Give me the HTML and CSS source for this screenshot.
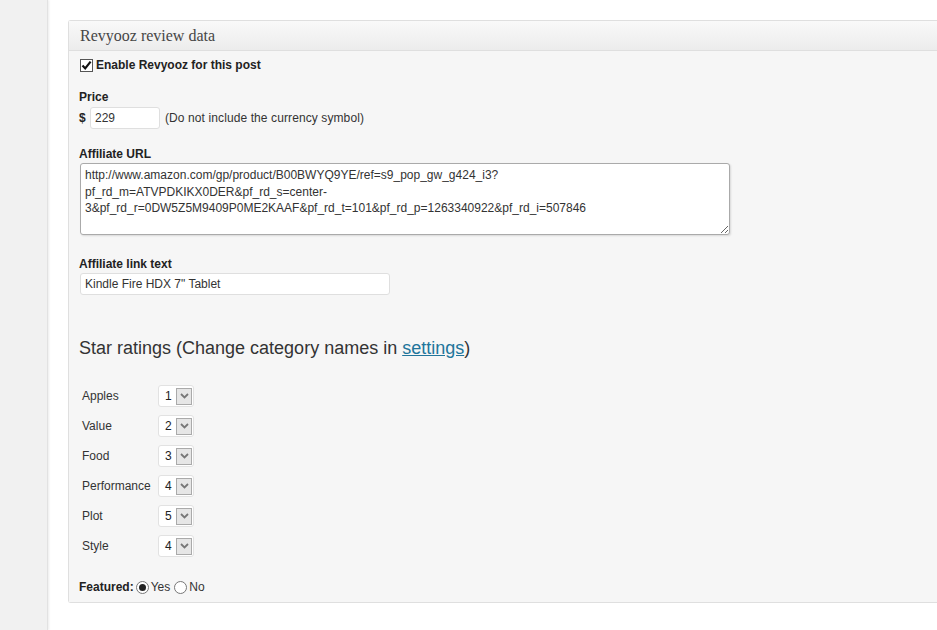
FILE: index.html
```html
<!DOCTYPE html>
<html>
<head>
<meta charset="utf-8">
<link rel="stylesheet" href="styles.css">
</head>
<body>
<div class="page">
  <div class="sidebar"></div>
  <div class="main">
    <div class="panel">
      <div class="panel-head"><h3>Revyooz review data</h3></div>
      <div class="panel-body">
        <div class="check-row">
          <span class="checkbox"><svg width="11" height="11" viewBox="0 0 11 11"><path d="M1.5 5.5 L4.2 8.4 L9.6 1.6" fill="none" stroke="#111" stroke-width="2.2"/></svg></span>
          <span class="bold">Enable Revyooz for this post</span>
        </div>

        <div class="label price-label">Price</div>
        <div class="price-row">
          <span class="bold dollar">$</span>
          <input class="text price-input" type="text" value="229">
          <span class="hint">(Do not include the currency symbol)</span>
        </div>

        <div class="label url-label">Affiliate URL</div>
        <textarea class="url-area" spellcheck="false">http://www.amazon.com/gp/product/B00BWYQ9YE/ref=s9_pop_gw_g424_i3?pf_rd_m=ATVPDKIKX0DER&amp;pf_rd_s=center-3&amp;pf_rd_r=0DW5Z5M9409P0ME2KAAF&amp;pf_rd_t=101&amp;pf_rd_p=1263340922&amp;pf_rd_i=507846</textarea>

        <div class="label link-label">Affiliate link text</div>
        <input class="text link-input" type="text" value="Kindle Fire HDX 7&quot; Tablet">

        <h2 class="star-title">Star ratings (Change category names in <a href="#">settings</a>)</h2>

        <div class="ratings">
          <div class="rating"><span class="rname">Apples</span><span class="sel"><span class="num">1</span><span class="arrow"><svg width="9" height="6" viewBox="0 0 9 6"><path d="M1 1 L4.5 4.5 L8 1" fill="none" stroke="#777" stroke-width="1.8"/></svg></span></span></div>
          <div class="rating"><span class="rname">Value</span><span class="sel"><span class="num">2</span><span class="arrow"><svg width="9" height="6" viewBox="0 0 9 6"><path d="M1 1 L4.5 4.5 L8 1" fill="none" stroke="#777" stroke-width="1.8"/></svg></span></span></div>
          <div class="rating"><span class="rname">Food</span><span class="sel"><span class="num">3</span><span class="arrow"><svg width="9" height="6" viewBox="0 0 9 6"><path d="M1 1 L4.5 4.5 L8 1" fill="none" stroke="#777" stroke-width="1.8"/></svg></span></span></div>
          <div class="rating"><span class="rname">Performance</span><span class="sel"><span class="num">4</span><span class="arrow"><svg width="9" height="6" viewBox="0 0 9 6"><path d="M1 1 L4.5 4.5 L8 1" fill="none" stroke="#777" stroke-width="1.8"/></svg></span></span></div>
          <div class="rating"><span class="rname">Plot</span><span class="sel"><span class="num">5</span><span class="arrow"><svg width="9" height="6" viewBox="0 0 9 6"><path d="M1 1 L4.5 4.5 L8 1" fill="none" stroke="#777" stroke-width="1.8"/></svg></span></span></div>
          <div class="rating"><span class="rname">Style</span><span class="sel"><span class="num">4</span><span class="arrow"><svg width="9" height="6" viewBox="0 0 9 6"><path d="M1 1 L4.5 4.5 L8 1" fill="none" stroke="#777" stroke-width="1.8"/></svg></span></span></div>
        </div>

        <div class="featured">
          <span class="bold">Featured:</span>
          <span class="radio on"><span class="dot"></span></span><span class="opt">Yes</span>
          <span class="radio"></span><span class="opt">No</span>
        </div>
      </div>
    </div>
  </div>
</div>
</body>
</html>
```

FILE: styles.css
```css
html, body {
  margin: 0;
  padding: 0;
  background: #fff;
  overflow: hidden;
}
body {
  font-family: "Liberation Sans", Arial, sans-serif;
  font-size: 12px;
  color: #333;
}
.page {
  display: flex;
  width: 937px;
  height: 630px;
}
.sidebar {
  width: 47px;
  flex: none;
  background: #f1f1f1;
  border-right: 1px solid #e2e2e2;
  box-shadow: 1px 0 2px rgba(0,0,0,0.08);
}
.main {
  flex: 1;
  padding: 20px 0 0 20px;
  overflow: hidden;
}
.panel {
  width: 900px;
  border: 1px solid #dfdfdf;
  border-right: none;
  background: #f5f5f5;
  border-radius: 3px 0 0 3px;
}
.panel-head {
  height: 29px;
  border-bottom: 1px solid #dfdfdf;
  background: linear-gradient(#f9f9f9, #ececec);
  box-shadow: 0 1px 0 #fff;
  display: flex;
  align-items: center;
}
.panel-head h3 {
  margin: 0 0 0 11px;
  font-family: "Liberation Serif", Georgia, serif;
  font-weight: normal;
  font-size: 16px;
  color: #464646;
  padding-top: 1px;
}
.panel-body {
  padding: 6px 0 7px 10px;
  background: #f6f6f6;
}
.bold { font-weight: bold; color: #222; }
.check-row {
  display: flex;
  align-items: center;
  height: 16px;
  gap: 3px;
  padding-left: 1px;
}
.checkbox {
  width: 11px;
  height: 11px;
  border: 1px solid #555;
  background: #fff;
  display: flex;
  align-items: center;
  justify-content: center;
}
.checkbox svg { display: block; }
.label {
  font-weight: bold;
  color: #222;
  line-height: 16px;
}
.price-label { margin-top: 16px; }
.price-row {
  margin-top: 2px;
  display: flex;
  align-items: center;
  height: 22px;
}
.dollar { width: 11px; }
.text {
  box-sizing: border-box;
  height: 22px;
  border: 1px solid #dfdfdf;
  border-radius: 3px;
  background: #fff;
  font-family: "Liberation Sans", Arial, sans-serif;
  font-size: 12px;
  color: #333;
  padding: 0 4px;
  margin: 0;
  outline: none;
}
.price-input { width: 70px; }
.hint { margin-left: 5px; letter-spacing: 0.1px; }
.url-label { margin-top: 17px; }
.url-area {
  display: block;
  box-sizing: border-box;
  margin: 1px 0 0 1px;
  width: 650px;
  height: 72px;
  border: 1px solid #aaa;
  border-radius: 3px;
  background: #fff;
  box-shadow: 1px 1px 2px rgba(0,0,0,0.12);
  font-family: "Liberation Sans", Arial, sans-serif;
  font-size: 12px;
  line-height: 16.5px;
  color: #333;
  padding: 3px 4px;
  outline: none;
}
.link-label { margin-top: 21px; }
.link-input {
  display: block;
  margin: 1px 0 0 1px;
  width: 310px;
}
.star-title {
  margin: 42px 0 0 0;
  font-size: 18px;
  line-height: 22px;
  font-weight: normal;
  color: #333;
}
.star-title a { color: #21759b; }
.ratings { margin-top: 22px; }
.rating {
  height: 30px;
  display: flex;
  align-items: center;
}
.rname {
  width: 76px;
  padding-left: 3px;
  color: #333;
}
.sel {
  box-sizing: border-box;
  width: 36px;
  height: 22px;
  border: 1px solid #e2e2e2;
  border-radius: 3px;
  background: #fff;
  display: flex;
  align-items: center;
  padding-left: 6px;
  gap: 2px;
}
.num { width: 9px; color: #222; font-size: 12px; }
.arrow {
  box-sizing: border-box;
  width: 16px;
  height: 17px;
  border: 1px solid #aaa;
  background: #e6e6e6;
  display: flex;
  align-items: center;
  justify-content: center;
}
.arrow svg { display: block; }
.featured {
  margin-top: 18px;
  height: 16px;
  display: flex;
  align-items: center;
}
.featured .bold { margin-right: 2px; }
.radio {
  box-sizing: border-box;
  width: 13px;
  height: 13px;
  border: 1px solid #777;
  border-radius: 50%;
  background: #fff;
  display: flex;
  align-items: center;
  justify-content: center;
}
.dot {
  width: 7px;
  height: 7px;
  border-radius: 50%;
  background: #222;
}
.opt { margin: 0 4px 0 2px; color: #333; }
```
